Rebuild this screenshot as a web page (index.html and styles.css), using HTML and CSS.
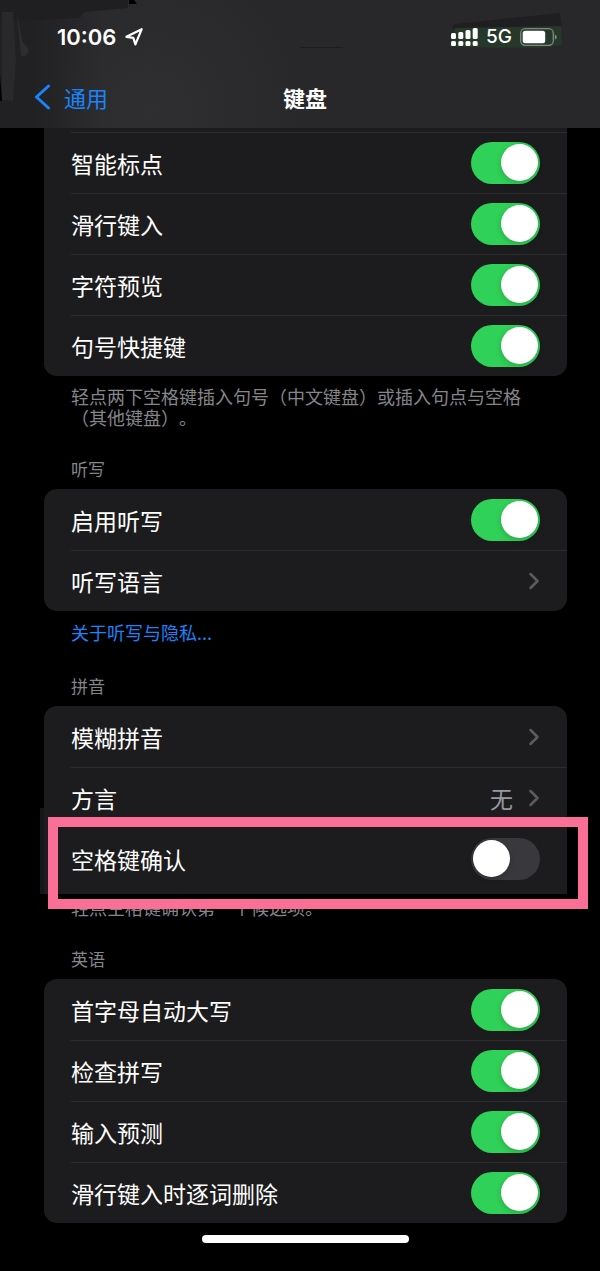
FILE: index.html
```html
<!DOCTYPE html>
<html lang="zh-CN">
<head>
<meta charset="utf-8">
<meta name="viewport" content="width=device-width, initial-scale=1">
<title>键盘</title>
<link rel="stylesheet" href="styles.css">
</head>
<body>
<header class="top">
  <svg class="smudges" viewBox="0 0 600 128" width="600" height="128" aria-hidden="true">
    <defs>
      <linearGradient id="fade" x1="0" x2="1" y1="0" y2="0"><stop offset="0" stop-color="#212123"/><stop offset=".3" stop-color="#212123"/><stop offset="1" stop-color="#212123" stop-opacity="0"/></linearGradient>
    </defs>
    <rect width="100" height="128" fill="url(#fade)"/>
    <path d="M0 0H128V8L84 12L80 18L30 20L0 20Z" fill="#1f1f21"/>
    <path d="M2 12L13 12L16 60L13 101L2 100Z" fill="#29292b"/>
    <path d="M17 13L22 40L29 50Q27 58 21 56Z" fill="#2d2d2f"/>
    <path d="M0 75L2 101H0ZM129 0H134L137 4H129Z" fill="#000"/>
    <path d="M300 47H340L345 48H300Z" fill="#1c1c1e"/>
    <path d="M455 24L560 13L562 27L452 29Z" fill="#1f1f21"/>
    <path d="M455 28L561 26L562 45L540 48L450 47Z" fill="#25382a"/>
  </svg>
  <div class="status">
    <div class="status-side">
      <span class="clock">10:06</span>
      <svg width="20" height="20" viewBox="0 0 20 20" aria-label="定位"><path d="M17.7 2.2L2.4 9.8L9.3 10.8L11.4 17.4Z" fill="none" stroke="#fff" stroke-width="2.2" stroke-linejoin="round"/></svg>
    </div>
    <div class="status-side status-right">
      <svg width="27" height="18" viewBox="0 0 27 18" fill="#fff" aria-label="信号">
        <rect x="0" y="5" width="5" height="6" rx="1.5"/><rect x="7.3" y="4" width="5" height="7" rx="1.5"/><rect x="14.5" y="2" width="5" height="9" rx="1.5"/><rect x="21.7" y="0" width="5" height="11" rx="1.5"/>
        <rect x="0" y="13" width="5" height="5" rx="1.5"/><rect x="7.3" y="13" width="5" height="5" rx="1.5"/><rect x="14.5" y="13" width="5" height="5" rx="1.5"/><rect x="21.7" y="13" width="5" height="5" rx="1.5"/>
      </svg>
      <span class="network">5G</span>
      <svg width="37" height="18" viewBox="0 0 37 18" aria-label="电池"><rect x=".7" y=".7" width="32.6" height="16.6" rx="4.5" fill="none" stroke="#7e8a80" stroke-width="1.3"/><rect x="2.7" y="2.7" width="22.5" height="12.6" rx="2.5" fill="#fff"/><path d="M34.8 6.5Q36.8 7 36.8 9T34.8 11.5Z" fill="#7e8a80"/></svg>
    </div>
  </div>
  <nav class="nav">
    <a class="back" href="#general"><svg width="17" height="26" viewBox="0 0 17 26" aria-hidden="true"><path d="M14.5 2L2.5 13L14.5 24" fill="none" stroke="#1a84fb" stroke-width="3" stroke-linecap="round" stroke-linejoin="round"/></svg>通用</a>
    <h1 class="title">键盘</h1>
  </nav>
</header>

<main class="content">
  <section class="section">
    <div class="group group-cut">
      <label class="row">智能标点<input class="switch" type="checkbox" role="switch" checked></label>
      <label class="row">滑行键入<input class="switch" type="checkbox" role="switch" checked></label>
      <label class="row">字符预览<input class="switch" type="checkbox" role="switch" checked></label>
      <label class="row">句号快捷键<input class="switch" type="checkbox" role="switch" checked></label>
    </div>
    <p class="note">轻点两下空格键插入句号（中文键盘）或插入句点与空格（其他键盘）。</p>
  </section>

  <section class="section">
    <h2 class="heading">听写</h2>
    <div class="group">
      <label class="row">启用听写<input class="switch" type="checkbox" role="switch" checked></label>
      <a class="row" href="#languages">听写语言<svg class="chevron" width="12" height="18" viewBox="0 0 12 18" aria-hidden="true"><path d="M2.5 2L9.5 9L2.5 16"/></svg></a>
    </div>
    <a class="note note-link" href="#privacy">关于听写与隐私...</a>
  </section>

  <section class="section">
    <h2 class="heading">拼音</h2>
    <div class="group group-marked">
      <a class="row" href="#fuzzy">模糊拼音<svg class="chevron" width="12" height="18" viewBox="0 0 12 18" aria-hidden="true"><path d="M2.5 2L9.5 9L2.5 16"/></svg></a>
      <a class="row" href="#dialect">方言<span class="value">无</span><svg class="chevron" width="12" height="18" viewBox="0 0 12 18" aria-hidden="true"><path d="M2.5 2L9.5 9L2.5 16"/></svg></a>
      <div class="marked">
        <label class="row">空格键确认<input class="switch" type="checkbox" role="switch"></label>
      </div>
    </div>
    <p class="note note-close">轻点空格键确认第一个候选项。</p>
  </section>

  <section class="section">
    <h2 class="heading">英语</h2>
    <div class="group">
      <label class="row">首字母自动大写<input class="switch" type="checkbox" role="switch" checked></label>
      <label class="row">检查拼写<input class="switch" type="checkbox" role="switch" checked></label>
      <label class="row">输入预测<input class="switch" type="checkbox" role="switch" checked></label>
      <label class="row">滑行键入时逐词删除<input class="switch" type="checkbox" role="switch" checked></label>
    </div>
  </section>
  <div class="home-bar"></div>
</main>
</body>
</html>
```
FILE: styles.css
```css
* { box-sizing: border-box; }

body {
  margin: 0;
  background: #000;
  color: #fff;
  font-family: "Noto Sans CJK SC", sans-serif;
  text-spacing-trim: space-all;
}

a { color: inherit; text-decoration: none; }
h1, h2, p { margin: 0; }

.top {
  position: relative;
  height: 128px;
  overflow: hidden;
  background: radial-gradient(circle at 150px 110px, #2f2f31, #28282a 160px);
}

.smudges { position: absolute; left: 0; top: 0; }

.status {
  position: relative;
  display: flex;
  justify-content: space-between;
  align-items: center;
  height: 74px;
  padding: 0 43px 0 57px;
  font-family: Inter, sans-serif;
}

.status-side { display: flex; align-items: center; gap: 8px; }
.clock { font-size: 22px; font-weight: 600; line-height: 28px; }
.network { font-size: 19px; font-weight: 500; line-height: 24px; }

.nav {
  position: relative;
  display: grid;
  grid-template-columns: 1fr auto 1fr;
  align-items: center;
  height: 46px;
  padding: 0 24px 0 34px;
  font-size: 22px;
  line-height: 32px;
}

.back { display: flex; align-items: center; gap: 13px; color: #1a84fb; }
.title { font-size: 22px; font-weight: 700; }

.content { padding: 0 33px 28px 44px; }
.section + .section { margin-top: 30px; }

.heading {
  margin-bottom: 9px;
  padding-left: 27px;
  color: #85858a;
  font-size: 17px;
  font-weight: 400;
  line-height: 22px;
}

.group { border-radius: 13px; background: #1c1c1e; }
.group-cut { padding-top: 4px; border-radius: 0 0 13px 13px; }

.row {
  display: flex;
  align-items: center;
  min-height: 61px;
  margin-left: 27px;
  padding: 0 27px 1px 0;
  border-top: 1px solid #2d2d31;
  font-size: 23px;
  line-height: 34px;
}

.group:not(.group-cut) > .row:first-child,
.marked .row { border-top-color: transparent; }

.switch {
  appearance: none;
  display: flex;
  align-items: center;
  flex: none;
  width: 69px;
  height: 42px;
  margin: 0 0 0 auto;
  padding: 0 2px;
  border-radius: 21px;
  background: #39393d;
}

.switch::before {
  content: "";
  width: 37px;
  height: 37px;
  border-radius: 50%;
  background: #fff;
  box-shadow: 0 2px 6px rgba(0, 0, 0, .2);
}

.switch:checked { justify-content: flex-end; background: #30d158; }

.chevron {
  flex: none;
  margin-left: auto;
  fill: none;
  stroke: #5c5c60;
  stroke-width: 2.5;
  stroke-linecap: round;
  stroke-linejoin: round;
}

.value { margin-left: auto; color: #98989e; }
.value + .chevron { margin-left: 15px; }

.note {
  display: block;
  padding: 10px 24px 0 27px;
  color: #85858a;
  font-size: 18px;
  line-height: 21px;
}

.note-link { color: #1a84fb; line-height: 22px; }
.section > .note-link { margin-bottom: 32px; }
.note-close { padding-top: 3px; }

.group-marked { position: relative; border-radius: 13px 13px 0 0; }

/* Ragged dark edge beside the highlighted row */
.group-marked::before {
  content: "";
  position: absolute;
  left: -4px;
  bottom: 0;
  width: 4px;
  height: 86px;
  background: #161618;
}

.marked { position: relative; padding-bottom: 5px; }

.marked::after {
  content: "";
  position: absolute;
  inset: -11px -21px -15px 4px;
  border: 10px solid #f96f96;
  pointer-events: none;
}

.home-bar {
  width: 207px;
  height: 8px;
  margin: 12px auto 0;
  border-radius: 4px;
  background: #fff;
}
```
